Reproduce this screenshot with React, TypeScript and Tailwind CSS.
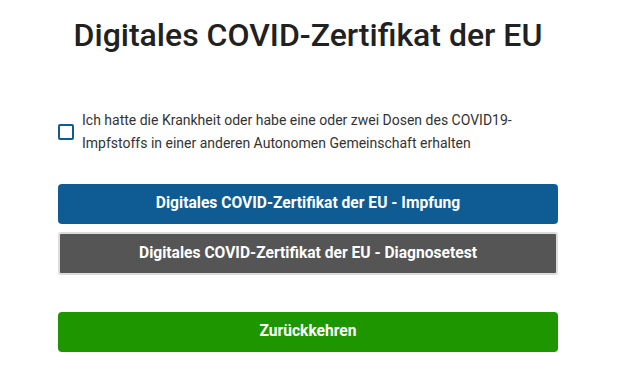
export default function App() {
  return (
    <div className="min-h-screen bg-white font-['Roboto',sans-serif]">
      <div className="ml-[58px] w-[500px] pt-[16px]">
        <h1 className="text-center text-[32px] leading-[38px] font-medium text-[#212121]">
          Digitales COVID-Zertifikat der EU
        </h1>

        <label className="mt-[55px] flex items-center gap-[8px]">
          <span className="h-[16px] w-[16px] shrink-0 rounded-[2px] border-2 border-[#0f5a92] bg-white" />
          <span className="text-[14px] leading-[23px] text-[#333]">
            Ich hatte die Krankheit oder habe eine oder zwei Dosen des COVID19-
            <br />
            Impfstoffs in einer anderen Autonomen Gemeinschaft erhalten
          </span>
        </label>

        <div className="mt-[29px] flex flex-col gap-[8px]">
          <button className="h-[40px] w-full rounded-[4px] bg-[#0f5b94] text-[15.6px] font-bold text-white">
            Digitales COVID-Zertifikat der EU - Impfung
          </button>
          <button className="h-[43px] w-full rounded-[3px] border-2 border-[#dcdcdc] bg-[#555555] text-[15.6px] font-bold text-white">
            Digitales COVID-Zertifikat der EU - Diagnosetest
          </button>
        </div>

        <button className="mt-[37px] h-[40px] w-full rounded-[4px] bg-[#1e9600] text-[15.6px] font-bold text-white">
          Zurückkehren
        </button>
      </div>
    </div>
  );
}
